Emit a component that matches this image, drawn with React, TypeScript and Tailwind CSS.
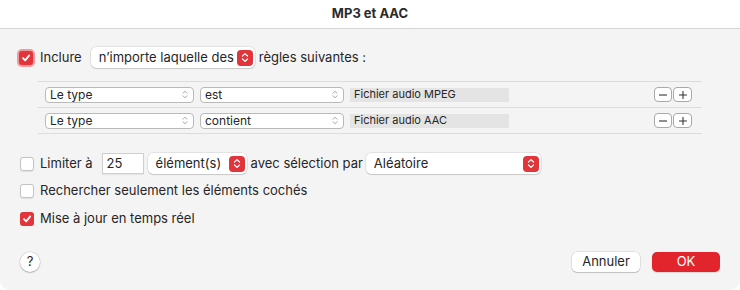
import React from "react";

const font = { fontFamily: "Inter, 'Noto Sans', sans-serif" };

function Check({ on, ring }: { on?: boolean; ring?: boolean }) {
  const box = on ? (
    <span className="grid h-[14px] w-[14px] shrink-0 place-items-center rounded-[3px] bg-[#e1353b]">
      <svg width="10" height="10" viewBox="0 0 10 10" fill="none">
        <path d="M2 5.2 L4.2 7.4 L8.2 2.4" stroke="white" strokeWidth="1.8" strokeLinecap="round" strokeLinejoin="round" />
      </svg>
    </span>
  ) : (
    <span className="block h-[14px] w-[14px] shrink-0 rounded-[3px] border border-[#c4c4c4] bg-white shadow-[0_0.5px_1px_rgba(0,0,0,0.08)]" />
  );
  if (!ring) return box;
  return <span className="grid h-[18px] w-[18px] place-items-center rounded-[5px] bg-[#f09aa0]">{box}</span>;
}

function Stepper() {
  return (
    <span className="grid h-[16px] w-[16px] place-items-center rounded-[4px] bg-[#e1353b]">
      <svg width="8" height="11" viewBox="0 0 8 11" fill="none">
        <path d="M1.5 4 L4 1.6 L6.5 4 M1.5 7 L4 9.4 L6.5 7" stroke="white" strokeWidth="1.3" strokeLinecap="round" strokeLinejoin="round" />
      </svg>
    </span>
  );
}

function PopUp({ label, w }: { label: string; w: string }) {
  return (
    <span className={`flex h-[21px] items-center justify-between rounded-[5px] bg-white pl-[8px] pr-[2px] shadow-[0_0_0_0.5px_rgba(0,0,0,0.14),0_1px_1px_rgba(0,0,0,0.12)] ${w}`}>
      <span>{label}</span>
      <Stepper />
    </span>
  );
}

function SmallPopUp({ label, w }: { label: string; w: string }) {
  return (
    <span className={`flex h-[16px] items-center justify-between rounded-[4px] border border-[#b9b9b9] bg-white pl-[4px] pr-[5px] text-[12px] ${w}`}>
      <span>{label}</span>
      <svg width="6" height="9" viewBox="0 0 6 9" fill="none">
        <path d="M1 3.2 L3 1.2 L5 3.2 M1 5.8 L3 7.8 L5 5.8" stroke="#9a9a9a" strokeWidth="0.9" strokeLinecap="round" strokeLinejoin="round" />
      </svg>
    </span>
  );
}

function RuleRow({ op, value }: { op: string; value: string }) {
  return (
    <div className="flex h-[26px] items-center border-b border-[#dcdcdc] pl-[7px]">
      <SmallPopUp label="Le type" w="w-[149px]" />
      <span className="ml-[6px]">
        <SmallPopUp label={op} w="w-[144px]" />
      </span>
      <span className="ml-[6px] flex h-[14px] w-[159px] items-center bg-[#e4e4e4] pl-[4px] text-[11px]">{value}</span>
      <span className="ml-auto mr-[10px] flex gap-[1px]">
        <span className="grid h-[15px] w-[18px] place-items-center rounded-[4px] border border-[#a9a9a9] bg-white">
          <svg width="10" height="10" viewBox="0 0 10 10"><path d="M1 5 H9" stroke="#333" strokeWidth="1.1" /></svg>
        </span>
        <span className="grid h-[15px] w-[19px] place-items-center rounded-[4px] border border-[#a9a9a9] bg-white">
          <svg width="10" height="10" viewBox="0 0 10 10"><path d="M1 5 H9 M5 1 V9" stroke="#333" strokeWidth="1.1" /></svg>
        </span>
      </span>
    </div>
  );
}

export default function App() {
  return (
    <div className="h-[290px] w-[740px] bg-white text-[13px] text-[#262626]" style={font}>
      <div className="flex h-[290px] flex-col rounded-b-[10px] bg-[#f5f4f4]">
        <div className="flex h-[29px] items-center justify-center border-b border-[#d5d5d5] bg-white text-[13px] font-bold text-[#2b2b2b]">
          MP3 et AAC
        </div>

        <div className="flex flex-col px-[18px]">
          <div className="mt-[18px] flex h-[21px] items-center">
            <span className="-ml-[1px]"><Check on ring /></span>
            <span className="ml-[5px]">Inclure</span>
            <span className="ml-[9px]">
              <PopUp label="n’importe laquelle des" w="w-[164px]" />
            </span>
            <span className="ml-[4px]">règles suivantes :</span>
          </div>

          <div className="ml-[20px] mt-[13px] w-[664px] border-t border-[#dcdcdc]">
            <RuleRow op="est" value="Fichier audio MPEG" />
            <RuleRow op="contient" value="Fichier audio AAC" />
          </div>

          <div className="mt-[19px] flex h-[21px] items-center">
            <span className="ml-[2px]"><Check /></span>
            <span className="ml-[6px]">Limiter à</span>
            <span className="ml-[9px] flex h-[21px] w-[42px] items-center border border-[#cfcfcf] bg-white pl-[4px] shadow-[0_1px_1px_rgba(0,0,0,0.05)]">25</span>
            <span className="ml-[4px]">
              <PopUp label="élément(s)" w="w-[99px]" />
            </span>
            <span className="ml-[4px]">avec sélection par</span>
            <span className="ml-[3px]">
              <PopUp label="Aléatoire" w="w-[175px]" />
            </span>
          </div>

          <div className="mt-[7px] flex h-[20px] items-center">
            <span className="ml-[2px]"><Check /></span>
            <span className="ml-[6px]">Rechercher seulement les éléments cochés</span>
          </div>

          <div className="mt-[8px] flex h-[20px] items-center">
            <span className="ml-[2px]"><Check on /></span>
            <span className="ml-[6px]">Mise à jour en temps réel</span>
          </div>

          <div className="mt-[22px] flex h-[21px] items-center">
            <span className="ml-[2px] grid h-[20px] w-[20px] place-items-center rounded-full bg-white text-[13px] shadow-[0_0_0_0.5px_rgba(0,0,0,0.15),0_1px_1.5px_rgba(0,0,0,0.2)]">?</span>
            <span className="ml-auto flex h-[20px] w-[68px] items-center justify-center rounded-[5px] bg-white shadow-[0_0_0_0.5px_rgba(0,0,0,0.15),0_1px_1px_rgba(0,0,0,0.15)]">Annuler</span>
            <span className="ml-[12px] mr-[2px] flex h-[20px] w-[68px] items-center justify-center rounded-[5px] bg-[#e2252c] text-white shadow-[0_1px_1px_rgba(0,0,0,0.12)]">OK</span>
          </div>
        </div>
      </div>
    </div>
  );
}
